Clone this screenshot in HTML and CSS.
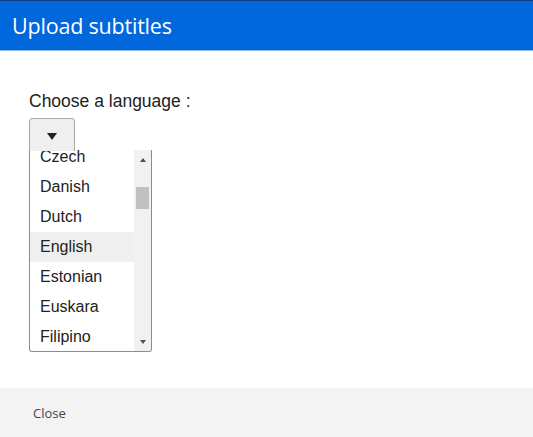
FILE: index.html
```html
<!DOCTYPE html>
<html lang="en">
<head>
    <meta charset="UTF-8">
    <title>Upload subtitles</title>
    <link rel="stylesheet" href="styles.css">
</head>
<body>
    <div class="dialog">
        <header class="dialog-header">
            <h1>Upload subtitles</h1>
        </header>

        <section class="dialog-body">
            <label class="lang-label">Choose a language :</label>
            <div class="picker">
                <button class="picker-toggle" aria-label="Open language list">
                    <span class="caret"></span>
                </button>
                <div class="listbox">
                    <ul class="options">
                        <li class="cut">Czech</li>
                        <li>Danish</li>
                        <li>Dutch</li>
                        <li class="hover">English</li>
                        <li>Estonian</li>
                        <li>Euskara</li>
                        <li>Filipino</li>
                    </ul>
                    <div class="scrollbar">
                        <span class="arrow up"></span>
                        <div class="track">
                            <div class="thumb"></div>
                        </div>
                        <span class="arrow down"></span>
                    </div>
                </div>
            </div>
        </section>

        <footer class="dialog-footer">
            <button class="close-btn">Close</button>
        </footer>
    </div>
</body>
</html>
```

FILE: styles.css
```css
body {
    margin: 0;
    padding: 0;
    background-color: #ffffff;
    font-family: "Liberation Sans", Arial, sans-serif;
    color: #222;
}

.dialog {
    width: 533px;
    height: 437px;
    display: flex;
    flex-direction: column;
}

.dialog-header {
    height: 51px;
    background-color: #0067dc;
    border-top: 1px solid #12407a;
    border-bottom: 1px solid #8fbdf0;
    display: flex;
    align-items: center;
    padding-left: 12px;
    box-sizing: border-box;
}

.dialog-header h1 {
    margin: 0;
    font-family: "Open Sans", "Noto Sans", sans-serif;
    font-weight: normal;
    font-size: 21.5px;
    color: #ffffff;
    letter-spacing: -0.2px;
}

.dialog-body {
    flex: 1;
    padding: 39px 0 0 29px;
}

.lang-label {
    display: block;
    font-size: 17.5px;
    line-height: 22px;
    color: #222;
    margin-bottom: 6px;
}

.picker {
    width: 123px;
}

.picker-toggle {
    display: flex;
    align-items: center;
    justify-content: center;
    width: 46px;
    height: 33px;
    margin: 0;
    padding: 0;
    background-color: #efefef;
    border: 1px solid #a9a9a9;
    border-bottom: none;
    border-radius: 4px 4px 0 0;
    position: relative;
    z-index: 1;
}

.caret {
    width: 0;
    height: 0;
    border-left: 5px solid transparent;
    border-right: 5px solid transparent;
    border-top: 7px solid #222;
    margin-top: 2px;
}

.listbox {
    display: flex;
    height: 202px;
    margin-top: -1px;
    border: 1px solid #8c8c8c;
    border-top: none;
    border-radius: 0 0 3px 3px;
    overflow: hidden;
    box-sizing: border-box;
    width: 123px;
}

.options {
    list-style: none;
    margin: -8px 0 0 0;
    padding: 0;
    flex: 1;
}

.options li {
    height: 30px;
    line-height: 30px;
    padding-left: 10px;
    font-size: 16px;
    color: #222;
}

.options li.hover {
    background-color: #efefef;
}

.scrollbar {
    width: 17px;
    background-color: #f1f1f1;
    display: flex;
    flex-direction: column;
    align-items: center;
}

.arrow {
    display: block;
    width: 0;
    height: 0;
    border-left: 3px solid transparent;
    border-right: 3px solid transparent;
}

.arrow.up {
    border-bottom: 4px solid #505050;
    margin: 8px 0 4px;
}

.arrow.down {
    border-top: 4px solid #505050;
    margin: 4px 0 7px;
}

.track {
    flex: 1;
    width: 100%;
    padding: 21px 2px 0;
    box-sizing: border-box;
}

.thumb {
    height: 22px;
    background-color: #c1c1c1;
}

.dialog-footer {
    height: 49px;
    background-color: #f3f3f3;
    display: flex;
    align-items: center;
    padding-left: 33px;
}

.close-btn {
    background: none;
    border: none;
    padding: 0;
    font-family: "Open Sans", "Noto Sans", sans-serif;
    font-size: 13px;
    color: #444;
    cursor: pointer;
}
```
